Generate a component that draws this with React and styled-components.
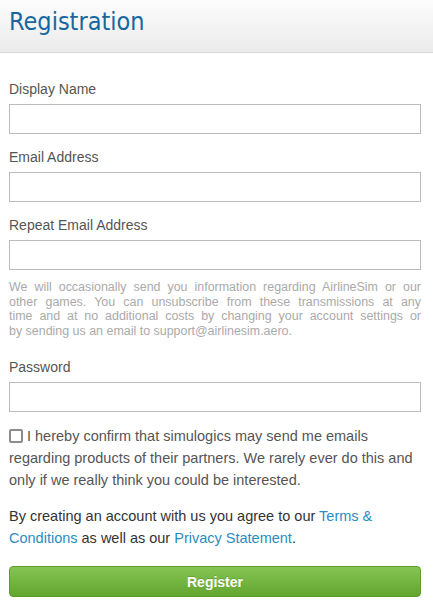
import React from "react";
import styled, { createGlobalStyle } from "styled-components";

const GlobalStyle = createGlobalStyle`
  body {
    margin: 0;
    background: #fff;
    font-family: "Liberation Sans", Arial, sans-serif;
  }
`;

const Page = styled.div`
  width: 433px;
  min-height: 606px;
  background: #fff;
`;

const Header = styled.header`
  height: 52px;
  padding: 0 9px;
  background: linear-gradient(#fcfcfc, #ebebeb);
  border-bottom: 1px solid #d9d9d9;
`;

const Title = styled.h1`
  margin: 0;
  font-family: "DejaVu Sans Condensed", "DejaVu Sans", sans-serif;
  font-weight: normal;
  font-size: 25px;
  line-height: 44px;
  color: #15689f;
`;

const Form = styled.form`
  padding: 26px 12px 0 9px;
`;

const Field = styled.div`
  margin-bottom: ${(p) => (p.$last ? "0" : "13px")};
`;

const Label = styled.label`
  display: block;
  font-size: 14px;
  line-height: 20px;
  color: #555;
  margin-bottom: 5px;
`;

const Input = styled.input`
  display: block;
  box-sizing: border-box;
  width: 100%;
  height: 30px;
  margin: 0;
  border: 1px solid #bbb;
  background: #fff;
  outline: none;
`;

const Hint = styled.p`
  margin: 10px 0 19px;
  font-size: 12.45px;
  line-height: 14.5px;
  color: #aaa;
`;

const HintLine = styled.span`
  display: block;
  text-align: justify;
  text-align-last: ${(p) => (p.$last ? "left" : "justify")};
`;

const Consent = styled.label`
  display: block;
  margin-top: 13px;
  font-size: 14.5px;
  line-height: 22px;
  color: #555;
`;

const Box = styled.span`
  display: inline-block;
  box-sizing: border-box;
  width: 14px;
  height: 14px;
  margin-right: 4px;
  border: 2px solid #8a8a92;
  border-radius: 2px;
  vertical-align: -2px;
`;

const Terms = styled.p`
  margin: 14px 0 17px;
  font-size: 14.5px;
  line-height: 22px;
  color: #333;
`;

const TextLink = styled.a`
  color: #2a8cc2;
  text-decoration: none;
`;

const Button = styled.button`
  display: block;
  width: 100%;
  height: 31px;
  border: 1px solid #5d9c2d;
  border-radius: 4px;
  background: linear-gradient(#86c454, #62a52e);
  color: #fff;
  font-family: "Liberation Sans", Arial, sans-serif;
  font-weight: bold;
  font-size: 14px;
  text-shadow: 0 -1px 0 rgba(0, 0, 0, 0.15);
  cursor: pointer;
`;

const hintLines = [
  "We will occasionally send you information regarding AirlineSim or our",
  "other games. You can unsubscribe from these transmissions at any",
  "time and at no additional costs by changing your account settings or",
  "by sending us an email to support@airlinesim.aero.",
];

export default function App() {
  return (
    <>
      <GlobalStyle />
      <Page>
        <Header>
          <Title>Registration</Title>
        </Header>
        <Form onSubmit={(e) => e.preventDefault()}>
          <Field>
            <Label>Display Name</Label>
            <Input type="text" />
          </Field>
          <Field>
            <Label>Email Address</Label>
            <Input type="email" />
          </Field>
          <Field $last>
            <Label>Repeat Email Address</Label>
            <Input type="email" />
          </Field>
          <Hint>
            {hintLines.map((line, i) => (
              <HintLine key={i} $last={i === hintLines.length - 1}>
                {line}
              </HintLine>
            ))}
          </Hint>
          <Field $last>
            <Label>Password</Label>
            <Input type="password" />
          </Field>
          <Consent>
            <Box />I hereby confirm that simulogics may send me emails
            regarding products of their partners. We rarely ever do this and
            only if we really think you could be interested.
          </Consent>
          <Terms>
            By creating an account with us you agree to our{" "}
            <TextLink href="#">Terms &amp; Conditions</TextLink> as well as our{" "}
            <TextLink href="#">Privacy Statement</TextLink>.
          </Terms>
          <Button type="submit">Register</Button>
        </Form>
      </Page>
    </>
  );
}
